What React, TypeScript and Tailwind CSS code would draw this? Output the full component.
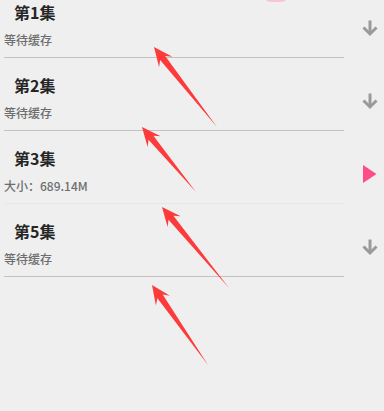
import React from "react";

type Item = { title: string; sub: string; kind: "down" | "play"; faint?: boolean };

const items: Item[] = [
  { title: "第1集", sub: "等待缓存", kind: "down" },
  { title: "第2集", sub: "等待缓存", kind: "down" },
  { title: "第3集", sub: "大小：689.14M", kind: "play", faint: true },
  { title: "第5集", sub: "等待缓存", kind: "down" },
];

function DownIcon() {
  return (
    <svg width="18" height="18" viewBox="0 0 18 18">
      <path d="M9 1.5 V15" stroke="#9a9a9a" strokeWidth="3" fill="none" />
      <path d="M2.5 8.5 L9 15 L15.5 8.5" stroke="#9a9a9a" strokeWidth="3" fill="none" strokeLinejoin="miter" />
    </svg>
  );
}

function PlayIcon() {
  return (
    <svg width="14" height="18" viewBox="0 0 14 18">
      <polygon points="0,0 13.5,9 0,18" fill="#ff4b8a" />
    </svg>
  );
}

function arrowPoints(tip: [number, number], tail: [number, number]) {
  const dx = tip[0] - tail[0];
  const dy = tip[1] - tail[1];
  const len = Math.hypot(dx, dy);
  const ux = dx / len;
  const uy = dy / len;
  const nx = -uy;
  const ny = ux;
  const headLen = 19;
  const headW = 8.5;
  const shaftW = 3.2;
  const bx = tip[0] - ux * headLen;
  const by = tip[1] - uy * headLen;
  const ix = tip[0] - ux * (headLen - 5);
  const iy = tip[1] - uy * (headLen - 5);
  const pts: [number, number][] = [
    tip,
    [bx + nx * headW, by + ny * headW],
    [ix + nx * shaftW, iy + ny * shaftW],
    tail,
    [ix - nx * shaftW, iy - ny * shaftW],
    [bx - nx * headW, by - ny * headW],
  ];
  return pts.map((p) => `${p[0].toFixed(1)},${p[1].toFixed(1)}`).join(" ");
}

const arrows: [[number, number], [number, number]][] = [
  [[154, 47], [217, 127]],
  [[142, 127], [196, 192]],
  [[162, 207], [229, 288]],
  [[152, 285], [208, 365]],
];

export default function App() {
  return (
    <div
      className="relative w-[384px] h-[411px] overflow-hidden bg-[#efefef]"
      style={{ fontFamily: '"Noto Sans CJK SC", "Noto Sans", sans-serif' }}
    >
      <div className="absolute left-[266px] top-[-6px] w-[20px] h-[8px] rounded-full bg-[#f9c4d4]" />
      <div className="mt-[-15px] flex flex-col">
        {items.map((it, i) => (
          <div key={i} className="flex">
            <div
              className={`ml-[4px] w-[340px] border-b ${it.faint ? "border-[#e8e8e8]" : "border-[#c2c2c2]"} pt-[17px] pb-[9px]`}
            >
              <div className="pl-[10px] h-[20px] leading-[20px] text-[16px] font-bold text-[#262626]">
                {it.title}
              </div>
              <div className="mt-[10px] h-[16px] leading-[16px] text-[12px] font-medium text-[#6e6e6e]">{it.sub}</div>
            </div>
            <div className="flex-1 flex items-center justify-center pl-[12px] pt-[12px]">
              {it.kind === "down" ? <DownIcon /> : <PlayIcon />}
            </div>
          </div>
        ))}
      </div>
      <svg className="absolute left-0 top-0 pointer-events-none" width="384" height="411">
        {arrows.map((a, i) => (
          <polygon key={i} points={arrowPoints(a[0], a[1])} fill="#fd3b3b" />
        ))}
      </svg>
    </div>
  );
}
